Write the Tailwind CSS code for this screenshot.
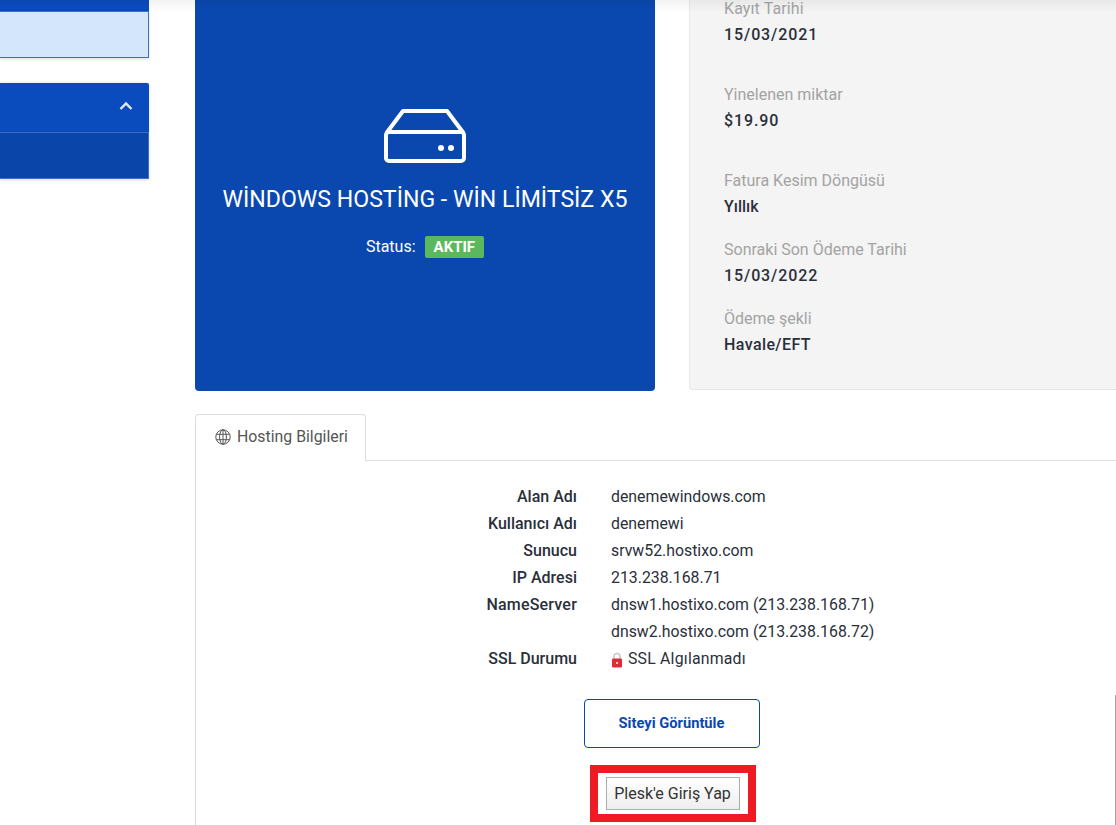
<!DOCTYPE html>
<html lang="en">
<head>
    <meta charset="UTF-8">
    <title>Hosting Bilgileri</title>
    <script src="https://cdn.jsdelivr.net/npm/@tailwindcss/browser@4"></script>
</head>
<body class="bg-white h-[825px] overflow-hidden font-['Roboto',sans-serif] text-[#2a2f3a]">
    <div class="relative flex items-start h-[825px] overflow-hidden">
        <!-- Sidebar -->
        <aside class="w-[149px] shrink-0 -mt-[20px]">
            <div class="h-[31px] bg-[#0a4bbd]"></div>
            <div class="h-[47px] bg-[#d4e6fb] border-r border-t border-b border-[#3a70c8] shadow-[0_1px_3px_rgba(0,0,0,0.15)]"></div>
            <div class="mt-[25px] h-[50px] bg-[#0a4bbd] rounded-tr-[2px] flex items-center justify-end pr-[16px] border-b border-[#3f70c4] shadow-[0_0_3px_rgba(0,0,0,0.15)]">
                <svg class="w-[14px] h-[10px] mb-[3px]" viewBox="0 0 14 10" fill="none" stroke="#e6e9f2" stroke-width="2.4">
                    <path d="M1.5 8 7 2.5 12.5 8"></path>
                </svg>
            </div>
            <div class="h-[46px] bg-[#0a45aa] border-r border-b border-[#3f70c4] shadow-[0_1px_3px_rgba(0,0,0,0.15)]"></div>
        </aside>

        <!-- Main -->
        <main class="ml-[46px] w-[921px] shrink-0 -mt-[20px]">
            <div class="flex gap-[34px] items-start">
                <!-- Product card -->
                <div class="w-[460px] h-[411px] shrink-0 bg-[#0a48b0] rounded-b-[4px] flex flex-col items-center text-white pt-[129px]">
                    <svg class="w-[82px] h-[54px]" viewBox="0 0 82 54" fill="none" stroke="#fff" stroke-width="4" stroke-linejoin="round">
                        <path d="M2.5 24 19 2h44l16.500 22"></path>
                        <rect x="2" y="23" width="78" height="29" rx="3"></rect>
                        <circle cx="57" cy="39" r="3" fill="#fff" stroke="none"></circle>
                        <circle cx="67" cy="39" r="3" fill="#fff" stroke="none"></circle>
                    </svg>
                    <h1 class="mt-[22px] text-[23.1px] leading-[30px]">WİNDOWS HOSTİNG - WİN LİMİTSİZ X5</h1>
                    <div class="mt-[20px] flex items-center text-[16px]">
                        <span>Status:</span>
                        <span class="ml-[9px] bg-[#5cb85c] rounded-[2px] px-[9px] h-[22px] leading-[22px] text-[15px] font-bold">AKTIF</span>
                    </div>
                </div>

                <!-- Details card -->
                <div class="w-[480px] h-[410px] shrink-0 bg-[#f4f4f4] border-b border-l border-[#e6e6e6] rounded-bl-[4px] pl-[34px] pt-[18px] text-[16px] leading-[22px] font-medium">
                    <div class="h-[86px]">
                        <p class="text-[#a3a3a3] font-normal tracking-[0.1px]">Kayıt Tarihi</p>
                        <p class="mt-[4px] tracking-[0.9px]">15/03/2021</p>
                    </div>
                    <div class="h-[86px]">
                        <p class="text-[#a3a3a3] font-normal">Yinelenen miktar</p>
                        <p class="mt-[4px] tracking-[0.9px]">$19.90</p>
                    </div>
                    <div class="h-[69px]">
                        <p class="text-[#a3a3a3] font-normal">Fatura Kesim Döngüsü</p>
                        <p class="mt-[4px]">Yıllık</p>
                    </div>
                    <div class="h-[69px]">
                        <p class="text-[#a3a3a3] font-normal">Sonraki Son Ödeme Tarihi</p>
                        <p class="mt-[4px] tracking-[0.9px]">15/03/2022</p>
                    </div>
                    <div>
                        <p class="text-[#a3a3a3] font-normal">Ödeme şekli</p>
                        <p class="mt-[4px] tracking-[0.4px]">Havale/EFT</p>
                    </div>
                </div>
            </div>

            <!-- Tab -->
            <div class="mt-[23px] flex">
                <div class="w-[171px] h-[47px] shrink-0 bg-white border border-b-0 border-[#dddddd] rounded-t-[4px] flex items-center pl-[19px] pb-[2px] text-[15.85px] text-[#555555]">
                    <svg class="w-[16px] h-[16px] mr-[6px]" viewBox="0 0 16 16" fill="none" stroke="#555" stroke-width="1">
                        <circle cx="8" cy="8" r="7.2"></circle>
                        <ellipse cx="8" cy="8" rx="3.4" ry="7.2"></ellipse>
                        <path d="M8 .8v14.400M1.400 5.300h13.200M1.400 10.700h13.200"></path>
                    </svg>
                    <span>Hosting Bilgileri</span>
                </div>
                <div class="flex-1 border-b border-[#dddddd]"></div>
            </div>

            <!-- Tab content -->
            <div class="border-l border-[#dddddd] h-[400px] pt-[22px] text-[15.85px] leading-[27px]">
                <div class="grid grid-cols-[381px_1fr] gap-x-[34px]">
                    <div class="text-right font-medium text-[16px]">Alan Adı</div><div>denemewindows.com</div>
                    <div class="text-right font-medium text-[16px]">Kullanıcı Adı</div><div>denemewi</div>
                    <div class="text-right font-medium text-[16px]">Sunucu</div><div>srvw52.hostixo.com</div>
                    <div class="text-right font-medium text-[16px]">IP Adresi</div><div>213.238.168.71</div>
                    <div class="text-right font-medium text-[16px] tracking-[0.2px]">NameServer</div><div>dnsw1.hostixo.com (213.238.168.71)</div>
                    <div></div><div>dnsw2.hostixo.com (213.238.168.72)</div>
                    <div class="text-right font-medium text-[16px]">SSL Durumu</div>
                    <div class="flex items-center">
                        <svg class="w-[12px] h-[16px] mr-[5px] mt-[2px]" viewBox="0 0 12 16">
                            <path d="M3 8V4.500a3 3 0 0 1 6 0V8" fill="none" stroke="#c9c9c9" stroke-width="1.600"></path>
                            <rect x="1" y="6.500" width="10" height="9" rx="1" fill="#df2b3a"></rect>
                            <rect x="5" y="10" width="2" height="2" fill="#f7c9cd"></rect>
                        </svg>
                        <span class="tracking-[0.2px]">SSL Algılanmadı</span>
                    </div>
                </div>

                <div class="flex flex-col items-center ml-[31px]">
                    <a class="mt-[27px] w-[176px] h-[49px] flex items-center justify-center border border-[#0a48b0] rounded-[4px] text-[14.7px] font-bold text-[#0a48b0]">Siteyi Görüntüle</a>
                    <div class="mt-[17px] ml-[2px] w-[166px] h-[57px] border-[8px] border-[#ed1c24] flex items-center justify-center">
                        <button class="w-[134px] h-[33px] border border-[#adadad] bg-gradient-to-b from-white to-[#eeeeee] text-[16px] text-[#333333]">Plesk'e Giriş Yap</button>
                    </div>
                </div>
            </div>
        </main>

        <!-- Faint shadow under the page header, thin line at the right edge -->
        <div class="absolute top-0 left-0 right-0 h-[12px] bg-gradient-to-b from-black/5 to-transparent"></div>
        <div class="absolute right-0 top-[695px] w-px h-[130px] bg-[#a5a5a5]"></div>
    </div>
</body>
</html>
